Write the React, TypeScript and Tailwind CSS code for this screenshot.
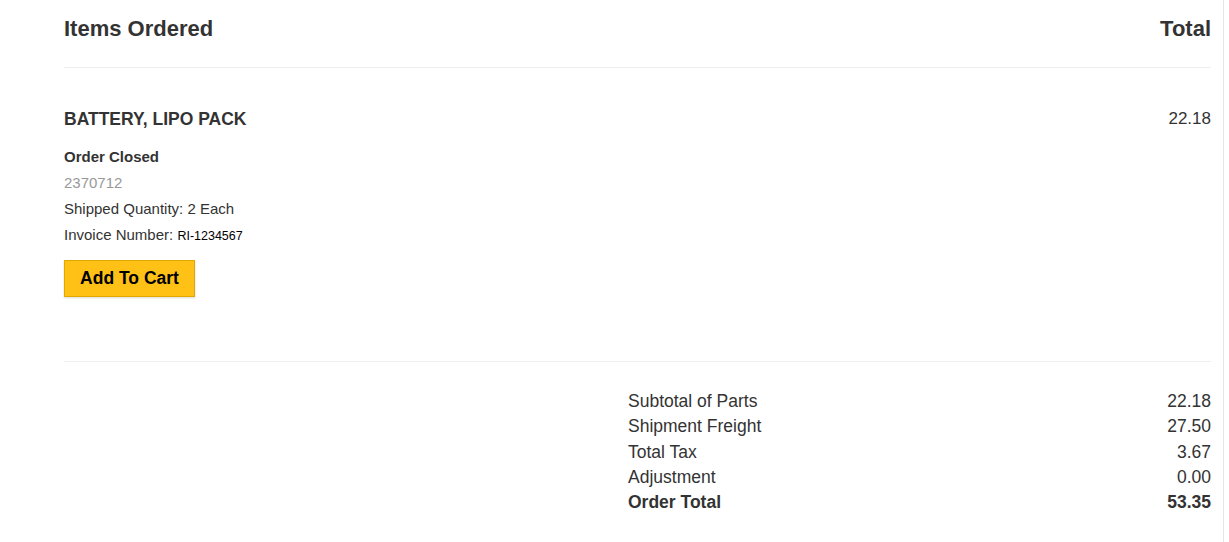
export default function App() {
  const summary = [
    { label: "Subtotal of Parts", value: "22.18" },
    { label: "Shipment Freight", value: "27.50" },
    { label: "Total Tax", value: "3.67" },
    { label: "Adjustment", value: "0.00" },
  ];

  return (
    <div className="min-h-[542px] bg-white font-['Liberation_Sans',Arial,sans-serif] text-[#333]">
      <div className="min-h-[542px] w-[1224px] border-r border-[#e5e5e5] pl-16 pr-3">
        {/* Header */}
        <div className="flex items-center justify-between border-b border-[#eee] pt-[15px] pb-[24px] text-[22px] font-bold leading-[28px]">
          <span>Items Ordered</span>
          <span>Total</span>
        </div>

        {/* Line item */}
        <div className="border-b border-[#eee] pt-[39px] pb-[64px]">
          <div className="flex items-start justify-between">
            <div>
              <div className="text-[17.5px] font-bold uppercase leading-6">Battery, LiPo Pack</div>
              <div className="mt-[13px] text-[15px] leading-[26px]">
                <div className="font-bold">Order Closed</div>
                <div className="text-[#999]">2370712</div>
                <div>Shipped Quantity: 2 Each</div>
                <div>
                  Invoice Number: <span className="text-[12.5px] text-black">RI-1234567</span>
                </div>
              </div>
              <button className="mt-[11px] block h-[37px] w-[131px] border border-[#e0a800] bg-[#ffc116] text-[17.5px] font-bold text-black shadow-[0_1px_2px_rgba(0,0,0,0.15)]">
                Add To Cart
              </button>
            </div>
            <div className="text-[17px] leading-6">22.18</div>
          </div>
        </div>

        {/* Summary */}
        <div className="flex justify-end pt-[27px]">
          <div className="w-[583px] text-[17.5px] leading-[25.25px]">
            {summary.map((row) => (
              <div key={row.label} className="flex justify-between">
                <span>{row.label}</span>
                <span>{row.value}</span>
              </div>
            ))}
            <div className="flex justify-between font-bold">
              <span>Order Total</span>
              <span>53.35</span>
            </div>
          </div>
        </div>
      </div>
    </div>
  );
}
